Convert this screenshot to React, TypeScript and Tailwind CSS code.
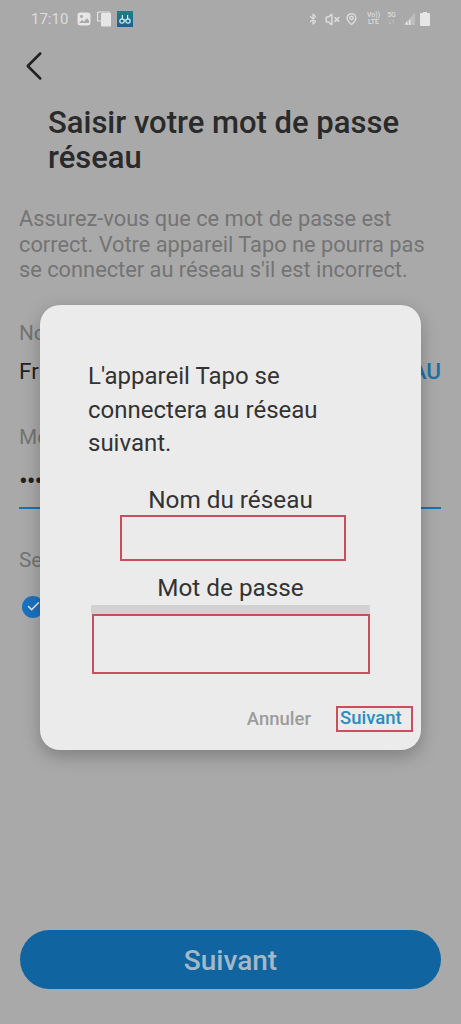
import { Bluetooth, Check, ChevronLeft, MapPin, VolumeX } from 'lucide-react';

function StatusBar() {
  return (
    <div className="h-[38px] flex items-center justify-between pl-[31px] pr-[31px] text-[#dcdcdc]">
      <div className="flex items-center">
        <span className="text-[15px] leading-none w-[46px]">17:10</span>
        {/* gallery */}
        <svg className="w-[14px] h-[14px]" viewBox="0 0 14 14">
          <rect x="0.5" y="0.5" width="13" height="13" rx="3" fill="#e6e6e6" />
          <circle cx="4.5" cy="4.5" r="1.4" fill="#a9a9a9" />
          <path d="M2 11l3-3 2 1.6 3-3.4 2 2.2V11z" fill="#a9a9a9" />
        </svg>
        {/* copy */}
        <svg className="w-[16px] h-[16px] ml-[6px]" viewBox="0 0 16 16">
          <rect x="0.5" y="1" width="12" height="9" rx="1" fill="none" stroke="#e6e6e6" strokeWidth="1.2" />
          <rect x="4" y="2" width="10" height="13.5" rx="1" fill="#e6e6e6" />
        </svg>
        {/* app with binoculars */}
        <div className="w-[16px] h-[16px] ml-[4px] bg-gradient-to-b from-[#1f7f82] to-[#1b5f92] flex items-center justify-center">
          <svg className="w-[12px] h-[12px]" viewBox="0 0 12 12" fill="none" stroke="#d6eef2" strokeWidth="1.2">
            <circle cx="3" cy="8" r="2.2" />
            <circle cx="9" cy="8" r="2.2" />
            <path d="M3.4 2v4M8.6 2v4M5 7h2" />
          </svg>
        </div>
      </div>
      <div className="flex items-center">
        <Bluetooth className="w-[12px] h-[14px]" strokeWidth={2.4} />
        <VolumeX className="w-[15px] h-[15px] ml-[6px]" strokeWidth={2.4} />
        <MapPin className="w-[13px] h-[14px] ml-[5px]" strokeWidth={2.6} />
        <div className="w-[17px] ml-[7px] text-[7px] leading-[7px] font-medium text-center">
          <div>Vo))</div>
          <div>LTE</div>
        </div>
        <div className="w-[13px] ml-[3px] text-[7px] leading-[7px] font-medium text-center">
          <div>5G</div>
          <div>↓↑</div>
        </div>
        <svg className="w-[14px] h-[14px] ml-[4px]" viewBox="0 0 14 14">
          <path d="M13 1v12H1z" fill="#bdbdbd" />
          <path d="M4 10h1.5v3H4zM7 8h1.5v5H7z" fill="#e6e6e6" />
        </svg>
        <svg className="w-[10px] h-[14px] ml-[4px]" viewBox="0 0 10 14">
          <path d="M3 0h4v1h2a1 1 0 0 1 1 1v11a1 1 0 0 1-1 1H1a1 1 0 0 1-1-1V2a1 1 0 0 1 1-1h2z" fill="#e6e6e6" />
        </svg>
      </div>
    </div>
  );
}

function Dialog() {
  return (
    <div className="absolute left-[40px] top-[305px] w-[381px] h-[445px] rounded-[20px] bg-[#ebebeb] shadow-[0_6px_18px_rgba(0,0,0,0.25)] pt-[55px] flex flex-col items-center">
      <p className="self-start ml-[48px] w-[270px] text-[24px] leading-[33.5px] text-[#333]">
        L'appareil Tapo se connectera au réseau suivant.
      </p>
      <p className="mt-[22px] text-[24.3px] leading-[34px] text-[#333]">Nom du réseau</p>
      <div className="ml-[5px] mt-[-2px] w-[226px] h-[46px] border-2 border-[#c8505e]" />
      <p className="mt-[10px] text-[24.3px] leading-[34px] text-[#333]">Mot de passe</p>
      <div className="w-[279px] h-[9px] bg-[#d2d2d2]" />
      <div className="w-[278px] h-[60px] border-2 border-[#c8505e]" />
      <div className="mt-[32px] self-end mr-[8px] flex items-center">
        <span className="text-[18.5px] leading-[24px] font-medium text-[#9c9c9c]">Annuler</span>
        <span className="ml-[25px] w-[77px] h-[26px] border-2 border-[#c8505e] text-[18.5px] leading-[20px] font-medium text-[#2a8cc4] pl-[2px]">
          Suivant
        </span>
      </div>
    </div>
  );
}

export default function App() {
  return (
    <div className="relative h-[1024px] bg-[#a9a9a9] overflow-hidden font-['Roboto',sans-serif]">
      <StatusBar />
      <div className="pl-[19px] pr-[20px]">
        <ChevronLeft className="ml-[-10.5px] mt-[2.5px] w-[50px] h-[50px] text-[#222]" strokeWidth={1.2} />
        <h1 className="mt-[14.5px] ml-[29px] text-[31px] leading-[35px] font-medium text-[#2a2a2a]">
          Saisir votre mot de passe réseau
        </h1>
        <p className="mt-[31px] text-[21.8px] leading-[25.5px] text-[#747474]">
          Assurez-vous que ce mot de passe est correct. Votre appareil Tapo ne pourra pas se connecter au réseau s'il est incorrect.
        </p>
        <p className="mt-[37px] text-[20.8px] leading-[26px] text-[#747474]">No</p>
        <div className="mt-[12px] flex justify-between text-[22.5px] leading-[26px]">
          <span className="text-[#222]">Fr</span>
          <span className="font-medium text-[#1a72ab]">AU</span>
        </div>
        <p className="mt-[40px] text-[20.8px] leading-[26px] text-[#747474]">Mo</p>
        <div className="mt-[23px] h-[36px] border-b-2 border-[#1a72ab] text-[26px] leading-[16px] text-[#222] tracking-[-1px]">
          •••
        </div>
        <p className="mt-[38px] text-[20.8px] leading-[26px] text-[#747474]">Se</p>
        <div className="mt-[23px] ml-[3px] w-[22px] h-[22px] rounded-full bg-[#1a72c0] flex items-center justify-center">
          <Check className="w-[15px] h-[15px] text-[#e4e4e4]" strokeWidth={2.5} />
        </div>
      </div>
      <Dialog />
      <div className="absolute left-[20px] right-[20px] top-[930px] h-[59px] rounded-full bg-[#10649f] flex items-center justify-center pt-[2px] text-[28px] font-medium text-[#a3b8c9]">
        Suivant
      </div>
    </div>
  );
}
